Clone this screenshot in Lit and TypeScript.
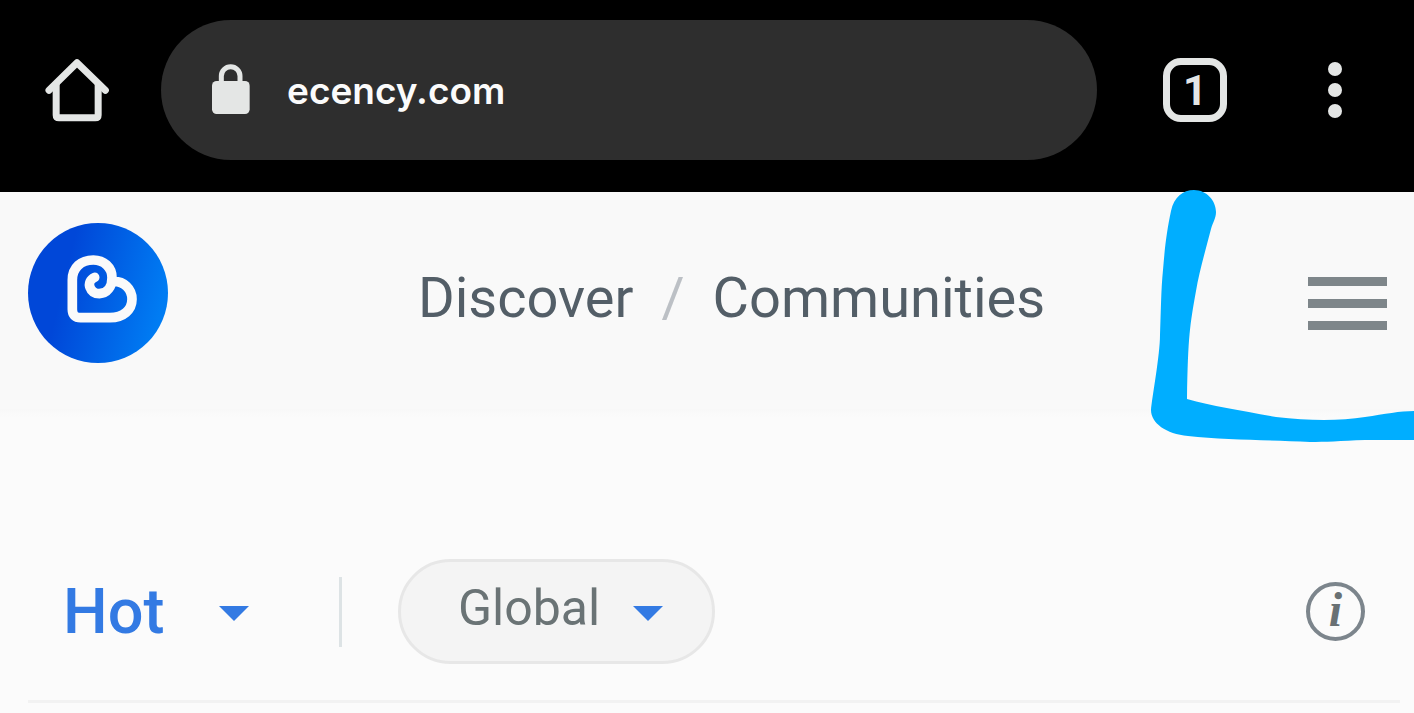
import { LitElement, html, css } from "lit";
import { customElement } from "lit/decorators.js";

@customElement("browser-bar")
class BrowserBar extends LitElement {
  static styles = css`
    :host {
      display: flex;
      align-items: center;
      padding: 20px 47px 32px 45px;
      background: #000;
      color: #e4e6e5;
    }
    button {
      display: grid;
      place-items: center;
      flex: none;
      box-sizing: border-box;
      width: 64px;
      height: 64px;
      margin: 0;
      padding: 0;
      border: 0;
      background: none;
      color: inherit;
    }
    svg {
      display: block;
      flex: none;
    }
    .address {
      display: flex;
      flex: 1;
      align-items: center;
      gap: 36px;
      min-width: 0;
      height: 140px;
      box-sizing: border-box;
      margin: 0 66px 0 52px;
      padding: 0 50px;
      border-radius: 70px;
      background: #2e2e2e;
    }
    .url {
      flex: 1;
      min-width: 0;
      padding: 2px 0 0;
      border: 0;
      outline: 0;
      background: none;
      color: #fbfbfb;
      font: 600 37px/48px Inter, sans-serif;
    }
    .tabs {
      margin-right: 76px;
      padding-top: 2px;
      border: 7px solid #e4e6e5;
      border-radius: 18px;
      font: 700 42px/48px Roboto, sans-serif;
    }
  `;

  render() {
    return html`
      <button aria-label="Home">
        <svg width="64" height="64" viewBox="75 54 192 192" fill="none" stroke="currentColor" stroke-width="21" stroke-linecap="round" stroke-linejoin="round">
          <path d="M87 151L171 68L256 151" />
          <path d="M108.500 134V225Q108.500 233.500 117 233.500H226Q234.500 233.500 234.500 225V134" />
        </svg>
      </button>
      <div class="address">
        <svg width="40" height="52" viewBox="574 71 120 156" aria-hidden="true">
          <rect x="577" y="122" width="113" height="99" rx="14" fill="currentColor" />
          <path d="M605 130V107A28 28 0 0 1 661 107V130" fill="none" stroke="currentColor" stroke-width="15" />
        </svg>
        <input class="url" type="text" aria-label="Address" value="ecency.com" />
      </div>
      <button class="tabs" aria-label="Open tabs: 1">1</button>
      <button aria-label="Menu">
        <svg width="64" height="64" viewBox="0 0 64 64" fill="currentColor">
          <circle cx="32" cy="11" r="7" />
          <circle cx="32" cy="32" r="7" />
          <circle cx="32" cy="53" r="7" />
        </svg>
      </button>
    `;
  }
}

@customElement("site-header")
class SiteHeader extends LitElement {
  static styles = css`
    :host {
      display: flex;
      align-items: flex-start;
      padding: 31px 27px 54px 28px;
      background: linear-gradient(#f9f9f9 calc(100% - 8px), #f8f8f8 calc(100% - 8px), #fbfbfb);
      font-family: Roboto, sans-serif;
    }
    svg {
      display: block;
    }
    .logo {
      flex: none;
    }
    nav {
      display: flex;
      flex: 1;
      justify-content: center;
      gap: 28px;
      padding-top: 42px;
      font-size: 56px;
      line-height: 66px;
    }
    nav a {
      color: #535e67;
      text-decoration: none;
    }
    .slash {
      color: #bcc0c5;
    }
    .burger {
      flex: none;
      margin: 54px 0 0;
      padding: 0 0 0 13px;
      border: 0;
      background: none;
      color: #7e868a;
    }
  `;

  render() {
    return html`
      <a class="logo" href="#" aria-label="Ecency">
        <svg width="140" height="140" viewBox="54 39 420 420">
          <defs>
            <linearGradient id="disc" x1="0" y1="0.38" x2="1" y2="0.62">
              <stop offset="0.25" stop-color="#0047d8" />
              <stop offset="0.55" stop-color="#005de3" />
              <stop offset="0.95" stop-color="#007cf3" />
            </linearGradient>
          </defs>
          <circle cx="264" cy="249" r="210" fill="url(#disc)" />
          <path
            d="M254 202C240 208 236 222 240 232C245 246 256 251 268 251C292 250 306 230 306 203C306 171 281 150 250 150C213 150 187 173 187 210V298Q187 323 212 323H300C340 323 366 300 366 268C366 236 340 214 313 214"
            fill="none" stroke="#fafafa" stroke-width="29" stroke-linecap="round" stroke-linejoin="round" />
        </svg>
      </a>
      <nav>
        <a href="#discover">Discover</a>
        <span class="slash">/</span>
        <a href="#communities">Communities</a>
      </nav>
      <button class="burger" aria-label="Open menu">
        <svg width="79" height="54" viewBox="0 0 79 54" fill="currentColor">
          <path d="M0 0H79V9H0zM0 22H79V31H0zM0 44H79V53H0z" />
        </svg>
      </button>
    `;
  }
}

@customElement("feed-toolbar")
class FeedToolbar extends LitElement {
  static styles = css`
    :host {
      display: flex;
      align-items: center;
      margin: 0 14px 0 28px;
      padding: 142px 35px 36px;
      border-bottom: 3px solid #f2f2f2;
      font-family: Roboto, sans-serif;
    }
    .picker {
      display: grid;
      align-items: center;
      box-sizing: border-box;
    }
    .picker > * {
      grid-area: 1 / 1;
    }
    select {
      appearance: none;
      margin: 0;
      border: 0;
      outline: 0;
      background: none;
      font-family: inherit;
    }
    .caret {
      justify-self: end;
      pointer-events: none;
      fill: #337ae3;
    }
    .sort select {
      padding: 0 84px 0 0;
      color: #337ae3;
      font-size: 63px;
      font-weight: 500;
      line-height: 76px;
    }
    .divider {
      width: 3px;
      height: 70px;
      margin: 0 56px 0 90px;
      background: #dde3e5;
    }
    .scope {
      height: 105px;
      border: 3px solid #e7e7e7;
      border-radius: 53px;
      background: #f4f4f4;
    }
    .scope select {
      padding: 0 111px 8px 57px;
      color: #6a7375;
      font-size: 50px;
      line-height: 60px;
    }
    .scope .caret {
      margin-right: 49px;
    }
    .info {
      box-sizing: border-box;
      width: 59px;
      height: 59px;
      margin: 0 0 0 auto;
      padding: 0 0 4px;
      border: 4px solid #7c858c;
      border-radius: 50%;
      background: none;
      color: #697174;
      font: italic 700 48px/46px "Liberation Serif", serif;
    }
  `;

  caret() {
    return html`<svg class="caret" width="30" height="18" viewBox="0 0 30 18" aria-hidden="true">
      <path d="M0 3H30L15 18z" />
    </svg>`;
  }

  render() {
    return html`
      <div class="picker sort">
        <select aria-label="Sort posts"><option>Hot</option></select>
        ${this.caret()}
      </div>
      <div class="divider"></div>
      <div class="picker scope">
        <select aria-label="Community scope"><option>Global</option></select>
        ${this.caret()}
      </div>
      <button class="info" aria-label="Information">i</button>
    `;
  }
}

@customElement("app-root")
class AppRoot extends LitElement {
  static styles = css`
    :host {
      display: block;
      position: relative;
      min-height: 100vh;
      overflow: hidden;
      background: #fbfbfb;
    }
    .marker {
      position: absolute;
      top: 190px;
      right: 0;
      pointer-events: none;
    }
  `;

  render() {
    return html`
      <browser-bar></browser-bar>
      <site-header></site-header>
      <feed-toolbar></feed-toolbar>
      <svg class="marker" width="264" height="254" viewBox="1150 190 264 254" aria-hidden="true">
        <path
          fill="#00aeff"
          d="M1171 211C1174 197 1183 190 1194 190C1207 190 1216 201 1216 212C1216 218 1213 222 1211 229C1205 252 1199 273 1196 291C1190 325 1188 335 1187 399C1212 406 1243 411 1276 417C1310 421 1340 421 1365 417C1385 414 1400 411 1414 411V440H1365C1340 441 1325 442 1310 442C1270 440 1225 440 1188 436C1166 434 1151 423 1151 410C1152 398 1160 355 1160 335C1161 310 1161 290 1163 270C1165 245 1167 230 1171 211z" />
      </svg>
    `;
  }
}
